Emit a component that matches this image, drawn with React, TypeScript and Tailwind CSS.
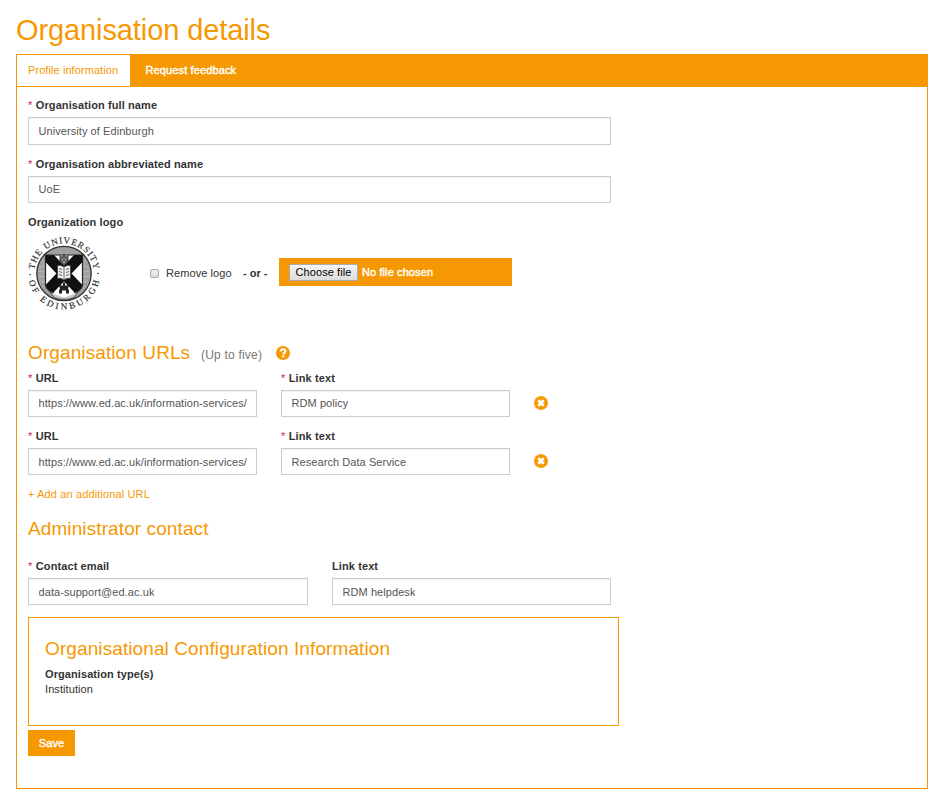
import type { ReactNode } from "react";

const FONT = "font-['Liberation_Sans',Arial,sans-serif]";

function Label({ children, required = false }: { children: ReactNode; required?: boolean }) {
  return (
    <div className="flex h-4 items-center gap-[3.500px] whitespace-nowrap text-[11px] leading-4 text-[#333]">
      {required && <span className="text-[#c7254e]">*</span>}
      <label className="font-bold tracking-[0.1px]">{children}</label>
    </div>
  );
}

function Field({ label, value, required = false, size }: { label: string; value: string; required?: boolean; size: string }) {
  return (
    <div className="flex flex-col gap-1">
      <Label required={required}>{label}</Label>
      <div className={`flex items-center border border-[#ccc] px-[9.500px] shadow-[inset_0_1px_1px_rgba(0,0,0,0.05)] ${size}`}>
        <span className="block overflow-hidden whitespace-nowrap text-[11px] leading-4 tracking-[0.07px] text-[#555]">{value}</span>
      </div>
    </div>
  );
}

function QuestionIcon() {
  return (
    <svg width="14" height="14" viewBox="0 0 14 14" className="shrink-0">
      <circle cx="7" cy="7" r="7" fill="#f69802" />
      <path d="M4.7 5.4C4.8 4 5.7 3.3 7 3.3s2.4.7 2.4 1.9c0 1.6-2.1 1.6-2.1 3.1" fill="none" stroke="#fff" strokeWidth="2.1" />
      <path d="M6.1 9.3h2.200v2H6.100z" fill="#fff" />
    </svg>
  );
}

function RemoveIcon() {
  return (
    <svg width="14" height="14" viewBox="0 0 14 14" className="shrink-0">
      <circle cx="7" cy="7" r="7" fill="#f69802" />
      <path d="M4.300 4.300l5.400 5.400M9.700 4.300L4.300 9.700" stroke="#fff" strokeWidth="2.700" />
    </svg>
  );
}

function Crest() {
  return (
    <svg width="76" height="76" viewBox="-38 -38.500 76 76" className="shrink-0">
      <defs>
        <path id="ring-top" d="M-30 0A30 30 0 0 1 30 0" />
        <path id="ring-bottom" d="M-36 0A36 36 0 0 0 36 0" />
        <clipPath id="shield">
          <path d="M-18.500-18.500h37V12Q17 19 0 24Q-17 19-18.500 12z" />
        </clipPath>
      </defs>
      <g fill="#2b2b2b" stroke="#2b2b2b" strokeWidth=".15" fontFamily="Liberation Serif, serif" fontSize="9">
        <text>
          <textPath href="#ring-top" startOffset="50%" textAnchor="middle" textLength="86">THE UNIVERSITY</textPath>
        </text>
        <text>
          <textPath href="#ring-bottom" startOffset="50%" textAnchor="middle" textLength="98">OF EDINBURGH</textPath>
        </text>
      </g>
      <circle cx="-34" cy="1" r=".8" fill="#333" />
      <circle cx="34" cy="0" r=".8" fill="#333" />
      <circle r="27.200" fill="#a0a0a0" stroke="#333" strokeWidth="1.300" />
      <path d="M-25-7h50M-26-2h52M-26 3h52M-25 8h50M-22-12h44M-22 13h44" stroke="#b4b4b4" strokeWidth="1.200" />
      <path d="M-15 17Q-12 20-5 18L0 23L5 18Q12 20 15 17L10 24Q0 28-10 24z" fill="#c9c9c9" stroke="#333" strokeWidth=".8" />
      <g clipPath="url(#shield)">
        <path d="M-19-21h38v46h-38z" fill="#fff" />
        <path d="M-20-21L20 21M20-21L-20 21" stroke="#111" strokeWidth="11" />
      </g>
      <path d="M-18.500-18.500h37V12Q17 17 10 19M-18.500-18.500V12Q-17 17-10 19" fill="none" stroke="#222" strokeWidth="1.200" />
      <path d="M-4-18l2 2 2-3 2 3 2-2v6q-1 3-4 3t-4-3z" fill="#666" stroke="#222" strokeWidth=".8" />
      <path d="M-2-14h1M1-14h1M-1-11h2" stroke="#bbb" strokeWidth="1" />
      <path d="M-6.500-8Q-3-9 0-6.500Q3-9 6.500-8V5Q3 4 0 6.500Q-3 4-6.500 5z" fill="#eee" stroke="#333" strokeWidth=".8" />
      <path d="M0-6V6M-5-5l3 1M-5-2l3 1M-5 1l3 1M5-5l-3 1M5-2l-3 1M5 1l-3 1" stroke="#555" strokeWidth=".9" />
      <path d="M-5 10h2v2h2V9h2v3h2v-2h2l-1 6h1v4h-3v-3h-4v3h-3v-4h1z" fill="#222" />
    </svg>
  );
}

const urls = [
  { url: "https://www.ed.ac.uk/information-services/", text: "RDM policy", size: "h-[27px] w-[229px] pb-[2px]" },
  { url: "https://www.ed.ac.uk/information-services/", text: "Research Data Service", size: "h-[27px] w-[229px]" },
];

export default function App() {
  return (
    <main className={`h-[802px] w-[940px] overflow-hidden bg-white pl-4 pt-[14px] text-[#333] ${FONT}`}>
      <h1 className="h-10 whitespace-nowrap text-[29px] leading-8 tracking-[-0.1px] text-[#f69802]">Organisation details</h1>
      <div className="flex h-[735px] w-[912px] flex-col border border-[#f69802]">
        <nav className="flex h-8 shrink-0 bg-[#f69802] text-[11px] leading-[30px]">
          <a className="h-[31px] w-[113px] whitespace-nowrap bg-white pl-[11px] tracking-[0.08px] text-[#f69802]">Profile information</a>
          <a className="whitespace-nowrap pl-[15.500px] tracking-[0.13px] text-white [-webkit-text-stroke:0.4px_white]">Request feedback</a>
        </nav>
        <form className="flex flex-col px-[11px] pt-[10px]">
          <Field label="Organisation full name" value="University of Edinburgh" required size="h-7 w-[583px]" />
          <div className="mt-[11px]">
            <Field label="Organisation abbreviated name" value="UoE" required size="h-[27px] w-[583px] pb-[2px]" />
          </div>
          <div className="mt-[11px]">
            <Label>Organization logo</Label>
          </div>
          <div className="mt-[5px] flex h-[76px] items-center text-[11px]">
            <div className="-ml-[2px] flex w-[124px]">
              <Crest />
            </div>
            <span className="h-[9px] w-[9px] rounded-[2px] border border-[#aaa] bg-linear-to-b from-[#eee] to-[#ddd]" />
            <span className="ml-[7px] w-[77px] whitespace-nowrap tracking-[0.08px]">Remove logo</span>
            <b className="w-9 whitespace-nowrap">- or -</b>
            <div className="-mt-[2px] flex h-7 w-[233px] items-center gap-1 bg-[#f69802] pl-[10px]">
              <span className="flex h-[17px] w-[69px] items-center justify-center whitespace-nowrap border border-[#aaa] bg-linear-to-b from-[#f5f5f5] to-[#ddd] tracking-[0.08px] text-black">Choose file</span>
              <span className="whitespace-nowrap tracking-[0.1px] text-white [-webkit-text-stroke:0.4px_white]">No file chosen</span>
            </div>
          </div>
          <div className="mt-[29px] flex h-[26px] items-center">
            <h2 className="w-[173px] whitespace-nowrap text-[19px] leading-6 tracking-[0.1px] text-[#f69802]">Organisation URLs</h2>
            <span className="mt-1 w-[75px] whitespace-nowrap text-[12px] tracking-[0.2px] text-[#777]">(Up to five)</span>
            <QuestionIcon />
          </div>
          <div className="mt-1 flex flex-col gap-[11px]">
            {urls.map((row, i) => (
              <div key={i} className="flex items-end gap-6">
                <Field label="URL" value={row.url} required size={row.size} />
                <Field label="Link text" value={row.text} required size={row.size} />
                <div className="flex h-[27px] items-center pb-px">
                  <RemoveIcon />
                </div>
              </div>
            ))}
          </div>
          <a className="mt-[11px] h-4 whitespace-nowrap text-[11px] leading-4 tracking-[0.13px] text-[#f69802]">+ Add an additional URL</a>
          <h2 className="mt-[15px] h-6 whitespace-nowrap text-[19px] leading-6 tracking-[0.1px] text-[#f69802]">Administrator contact</h2>
          <div className="mt-[17px] flex gap-6">
            <Field label="Contact email" value="data-support@ed.ac.uk" required size="h-[27px] w-[280px]" />
            <Field label="Link text" value="RDM helpdesk" size="h-[27px] w-[279px]" />
          </div>
          <section className="mt-3 h-[109px] w-[591px] border border-[#f69802] pl-4 pt-[19px]">
            <h2 className="h-[30px] whitespace-nowrap text-[19px] leading-6 tracking-[0.1px] text-[#f69802]">Organisational Configuration Information</h2>
            <div className="text-[11px] leading-[15px] tracking-[0.08px]">
              <b className="block">Organisation type(s)</b>
              <span className="block">Institution</span>
            </div>
          </section>
          <button type="button" className="mt-1 h-[26px] w-[47px] bg-[#f69802] text-[11px] tracking-[0.1px] text-white [-webkit-text-stroke:0.4px_white]">Save</button>
        </form>
      </div>
    </main>
  );
}
